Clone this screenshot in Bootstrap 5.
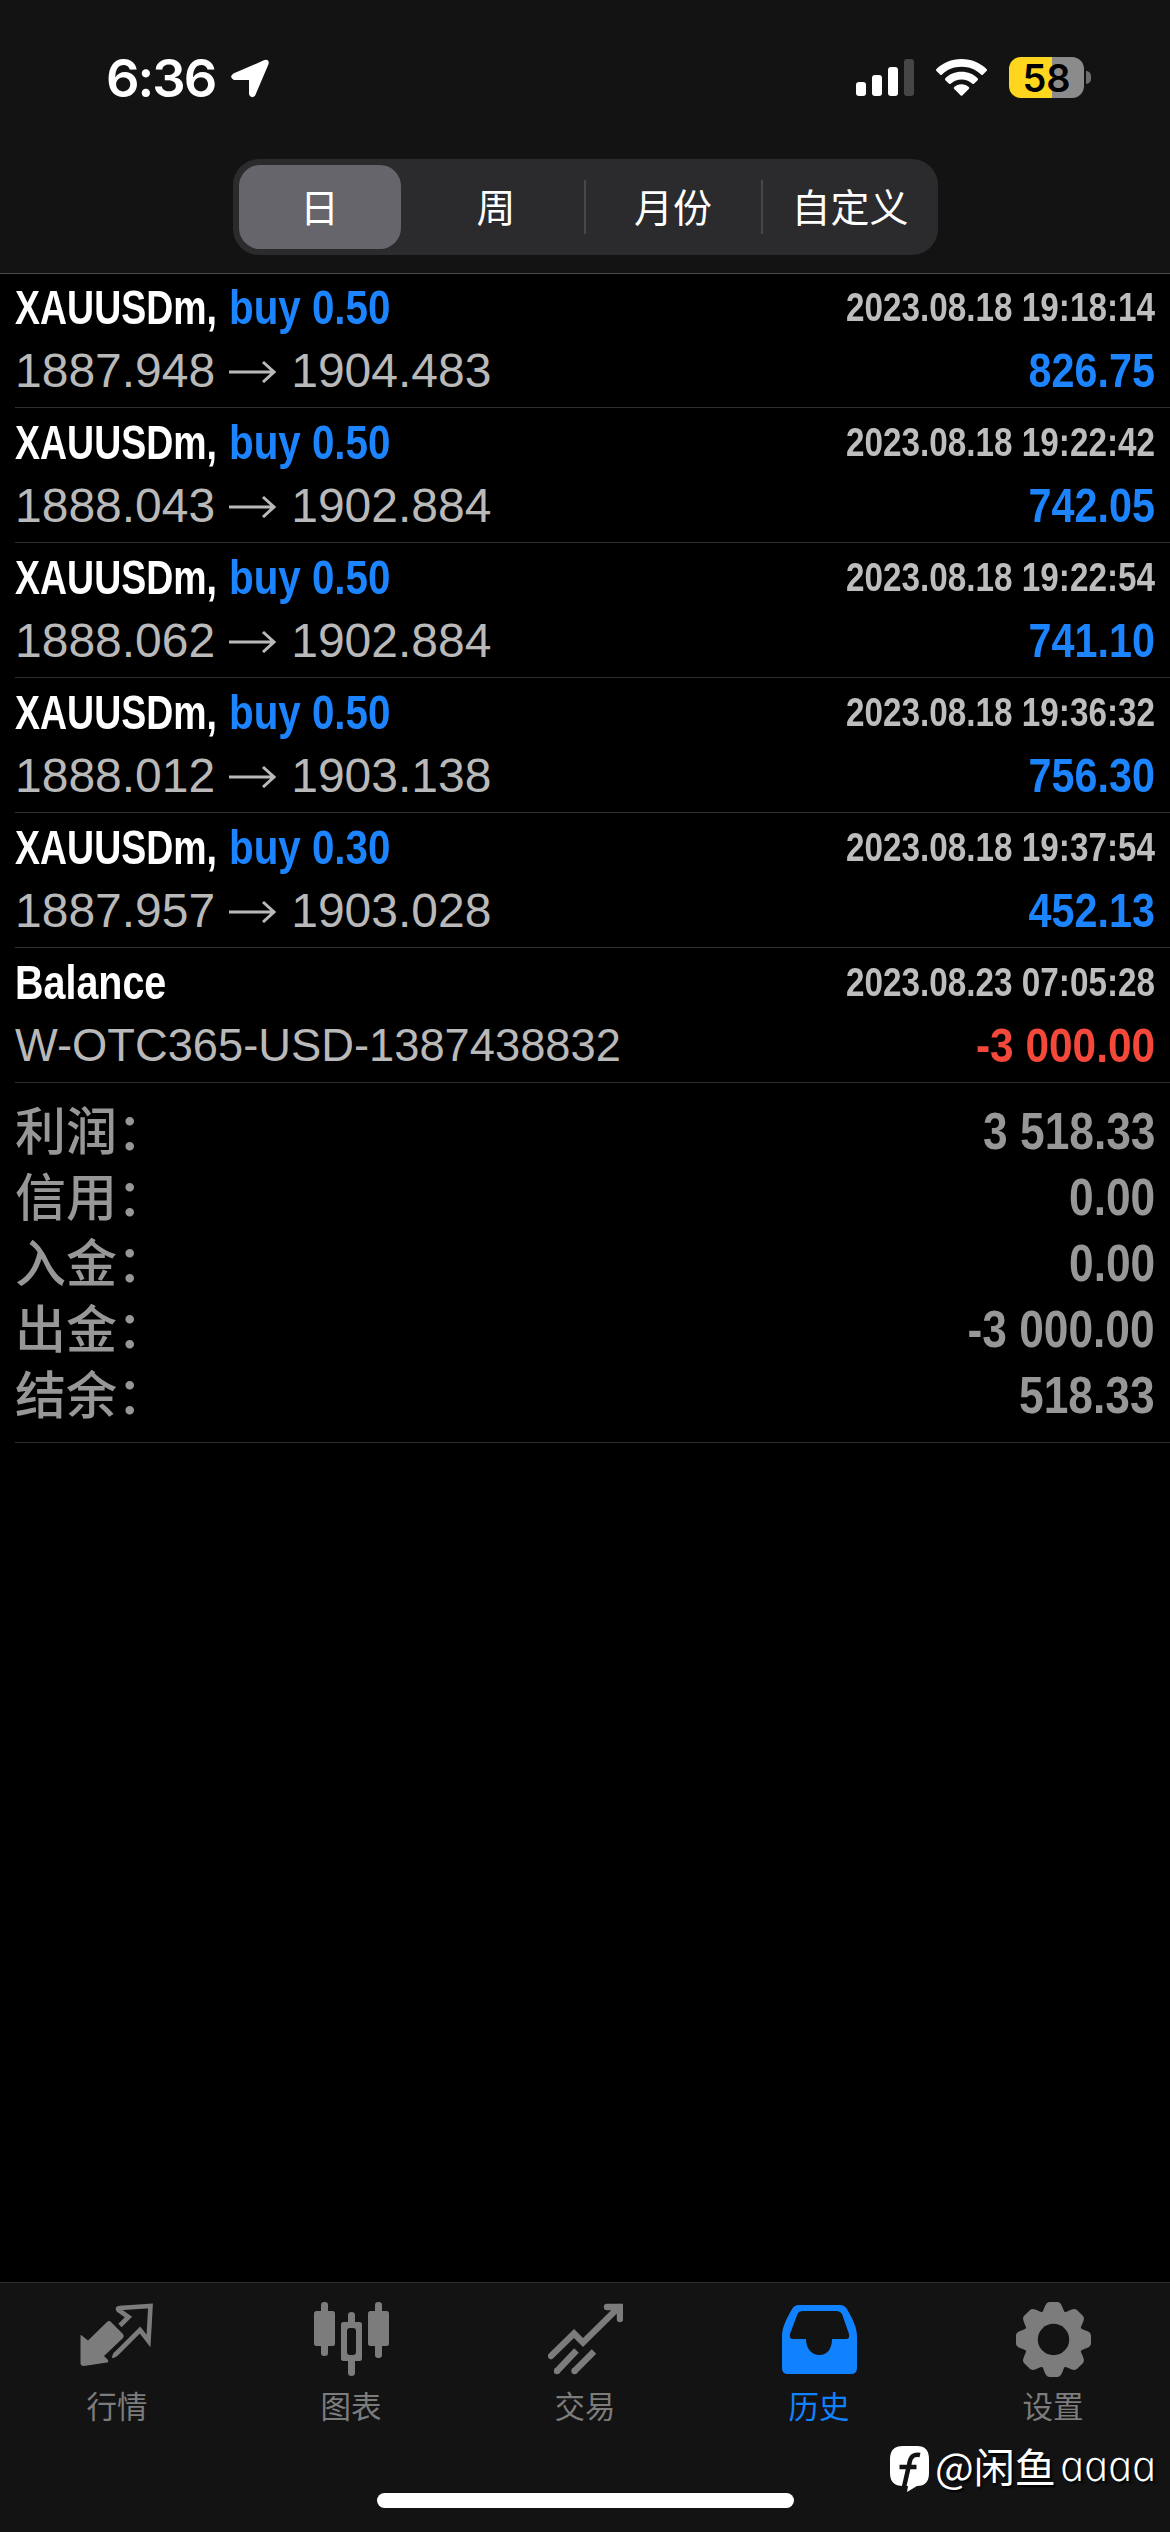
<!DOCTYPE html>
<html lang="zh-CN">
<head>
<meta charset="utf-8">
<meta name="viewport" content="width=device-width, initial-scale=1">
<title>历史</title>
<link rel="stylesheet" href="https://cdn.jsdelivr.net/npm/bootstrap@5.3.0/dist/css/bootstrap.min.css">
<style>
  body { background:#000; color:#fff; font-family:"Liberation Sans","Noto Sans CJK SC",sans-serif; }
  .screen { height:2532px; overflow:hidden; }
  .bar-bg { background:#131313; }
  .top-area { height:274px; border-bottom:1px solid #4b4b4b; }
  .status { height:159px; padding:57px 79px 0 106px; }
  .clock { font:600 52.5px/43px "Inter",sans-serif; width:125px; letter-spacing:-2px; }
  .status svg { display:block; flex:none; }
  .wifi { margin:0 22px; }
  .power { width:75px; height:41px; border-radius:12px; background:linear-gradient(90deg,#ffd61e 43px,#8b8b8b 43px); color:#000; font:600 38px/42px "Inter",sans-serif; }
  .power-tip { width:5px; height:13px; margin:14px 0 0 2px; border-radius:0 5px 5px 0; background:#6d6d6d; }
  .seg { width:705px; height:96px; padding:6px 0 6px 6px; border-radius:26px; background:#2b2b2d; font:400 39px/81px "Noto Sans CJK SC",sans-serif; }
  .seg .nav-link { color:#fff; height:84px; padding:0; flex:1 1 0; border-radius:0; text-align:center; }
  .seg .nav-link.active { flex:0 0 162px; margin-right:8px; border-radius:21px; background:#66656b; }
  .seg-line { width:2px; height:54px; background:#47474a; }
  .ledger { margin-top:-1px; }
  .deal { height:135px; margin-left:15px; padding:3px 15px 0 0; border-bottom:1px solid #2f2f2f; }
  .deal > div { height:63px; line-height:63px; white-space:nowrap; }
  .sym,.side,.when,.gain,.sum { font-weight:700; flex:none; white-space:nowrap; }
  .sym,.side { font-size:49px; transform-origin:0 50%; }
  .sym { width:214px; transform:scaleX(.765); }
  .sym-wide { transform:scaleX(.805); }
  .side { transform:scaleX(.823); color:#1c84ff; }
  .when { font-size:40.5px; line-height:62px; color:#bdbdbd; transform:scaleX(.822); transform-origin:100% 50%; }
  .gain { font-size:49px; color:#1c84ff; transform:scaleX(.843); transform-origin:100% 50%; }
  .gain.loss { color:#f4483a; transform:scaleX(.865); }
  .price { font-size:48px; color:#b9b9b9; }
  .price svg { margin:0 15px 0 13px; display:block; }
  .memo { font-size:45.3px; color:#b9b9b9; }
  .totals { height:360px; margin-left:15px; padding:15px 15px 0 0; border-bottom:1px solid #2f2f2f; color:#979797; }
  .totals > div { height:66px; line-height:66px; }
  .lbl { font:500 51px/60px "Noto Sans CJK SC",sans-serif; }
  .sum { font-size:51.5px; transform:scaleX(.86); transform-origin:100% 50%; }
  .tabs { height:250px; border-top:1px solid #303030; }
  .tabs .nav-link { width:234px; padding:19px 0 0; color:#7c7c7c; font:400 30.5px/44px "Noto Sans CJK SC",sans-serif; }
  .tabs .nav-link.active { color:#1182ff; }
  .tabs svg { display:block; margin-bottom:6px; }
  .home { width:417px; height:15px; border-radius:8px; left:377px; bottom:24px; background:#fff; }
  .stamp { left:889px; bottom:38px; height:50px; font:400 41px/42px "Noto Sans CJK SC",sans-serif; text-shadow:2px 2px 2px #000; white-space:nowrap; }
  .stamp span { margin-top:-8px; }
  .stamp i { display:inline-block; margin:-8px 0 0 3px; font:italic 300 43px/42px "Noto Sans","Open Sans",sans-serif; transform:skewX(12deg); }
</style>
<script src="https://cdn.jsdelivr.net/npm/bootstrap@5.3.0/dist/js/bootstrap.bundle.min.js"></script>
</head>
<body>
<div class="screen d-flex flex-column position-relative">
  <header class="top-area bar-bg flex-shrink-0">
    <div class="status d-flex">
      <div class="clock">6:36</div>
      <svg width="40" height="43" viewBox="0 0 40 43"><path d="M3 18 34 4.500Q37 3.500 36 7L23 37.500Q21 40 19.500 37V21.500H3.500Q0 20 3 18Z" fill="#fff" stroke="#fff" stroke-width="3" stroke-linejoin="round"/></svg>
      <svg class="ms-auto" width="58" height="41" viewBox="0 0 58 41"><g fill="#fff"><rect y="25" width="10" height="14" rx="3"/><rect x="16" y="18" width="10" height="21" rx="3"/><rect x="32" y="10" width="10" height="29" rx="3"/><rect x="48" y="2" width="10" height="37" rx="3" fill="#464646"/></g></svg>
      <svg class="wifi" width="51" height="41" viewBox="0 0 51 41"><g fill="#fff"><path d="M25.500 2C35.500 2 44.500 6 50.500 12Q51.500 13 50.500 14L47 17.500Q46 18.500 45 17.500C40 12.500 33 9.800 25.500 9.800S11 12.500 6 17.500Q5 18.500 4 17.500L.5 14Q-.5 13 .5 12C6.500 6 15.500 2 25.500 2Z"/><path d="M25.500 14.800C32 14.800 37.500 17.200 41.600 21.200Q42.600 22.200 41.600 23.200L38 26.700Q37 27.500 36 26.600C33 24 29.500 22.500 25.500 22.500S18 24 15 26.600Q14 27.500 13 26.700L9.400 23.200Q8.400 22.200 9.400 21.200C13.500 17.200 19 14.800 25.500 14.800Z"/><path d="M25.500 27.200C28.500 27.200 31 28.300 32.800 30Q33.800 31 32.800 32L26.500 38.200Q25.500 39.200 24.500 38.200L18.200 32Q17.200 31 18.200 30C20 28.300 22.500 27.200 25.500 27.200Z"/></g></svg>
      <div class="power text-center">58</div><div class="power-tip"></div>
    </div>
    <nav class="seg nav d-flex flex-nowrap align-items-center mx-auto">
      <a class="nav-link active">日</a><a class="nav-link">周</a><span class="seg-line"></span><a class="nav-link">月份</a><span class="seg-line"></span><a class="nav-link">自定义</a>
    </nav>
  </header>

  <main class="ledger flex-grow-1">
    <div class="deal">
      <div class="d-flex"><span class="sym">XAUUSDm,</span><span class="side">buy 0.50</span><span class="when ms-auto">2023.08.18 19:18:14</span></div>
      <div class="d-flex"><span class="price d-flex align-items-center">1887.948<svg width="48" height="24" viewBox="0 0 48 24"><path d="M1 13H46M35 3 46 13 35 23" fill="none" stroke="#b9b9b9" stroke-width="3"/></svg>1904.483</span><span class="gain ms-auto">826.75</span></div>
    </div>
    <div class="deal">
      <div class="d-flex"><span class="sym">XAUUSDm,</span><span class="side">buy 0.50</span><span class="when ms-auto">2023.08.18 19:22:42</span></div>
      <div class="d-flex"><span class="price d-flex align-items-center">1888.043<svg width="48" height="24" viewBox="0 0 48 24"><path d="M1 13H46M35 3 46 13 35 23" fill="none" stroke="#b9b9b9" stroke-width="3"/></svg>1902.884</span><span class="gain ms-auto">742.05</span></div>
    </div>
    <div class="deal">
      <div class="d-flex"><span class="sym">XAUUSDm,</span><span class="side">buy 0.50</span><span class="when ms-auto">2023.08.18 19:22:54</span></div>
      <div class="d-flex"><span class="price d-flex align-items-center">1888.062<svg width="48" height="24" viewBox="0 0 48 24"><path d="M1 13H46M35 3 46 13 35 23" fill="none" stroke="#b9b9b9" stroke-width="3"/></svg>1902.884</span><span class="gain ms-auto">741.10</span></div>
    </div>
    <div class="deal">
      <div class="d-flex"><span class="sym">XAUUSDm,</span><span class="side">buy 0.50</span><span class="when ms-auto">2023.08.18 19:36:32</span></div>
      <div class="d-flex"><span class="price d-flex align-items-center">1888.012<svg width="48" height="24" viewBox="0 0 48 24"><path d="M1 13H46M35 3 46 13 35 23" fill="none" stroke="#b9b9b9" stroke-width="3"/></svg>1903.138</span><span class="gain ms-auto">756.30</span></div>
    </div>
    <div class="deal">
      <div class="d-flex"><span class="sym">XAUUSDm,</span><span class="side">buy 0.30</span><span class="when ms-auto">2023.08.18 19:37:54</span></div>
      <div class="d-flex"><span class="price d-flex align-items-center">1887.957<svg width="48" height="24" viewBox="0 0 48 24"><path d="M1 13H46M35 3 46 13 35 23" fill="none" stroke="#b9b9b9" stroke-width="3"/></svg>1903.028</span><span class="gain ms-auto">452.13</span></div>
    </div>
    <div class="deal">
      <div class="d-flex"><span class="sym sym-wide">Balance</span><span class="when ms-auto">2023.08.23 07:05:28</span></div>
      <div class="d-flex"><span class="memo">W-OTC365-USD-1387438832</span><span class="gain loss ms-auto">-3 000.00</span></div>
    </div>
    <div class="totals">
      <div class="d-flex justify-content-between"><span class="lbl">利润：</span><span class="sum">3 518.33</span></div>
      <div class="d-flex justify-content-between"><span class="lbl">信用：</span><span class="sum">0.00</span></div>
      <div class="d-flex justify-content-between"><span class="lbl">入金：</span><span class="sum">0.00</span></div>
      <div class="d-flex justify-content-between"><span class="lbl">出金：</span><span class="sum">-3 000.00</span></div>
      <div class="d-flex justify-content-between"><span class="lbl">结余：</span><span class="sum">518.33</span></div>
    </div>
  </main>

  <footer class="tabs bar-bg flex-shrink-0 nav flex-nowrap align-items-start">
    <a class="nav-link d-flex flex-column align-items-center">
      <svg width="75" height="75" viewBox="1 0 75 75"><path d="M1.500 33Q3 33 4 34.500L9 38.500 28 20Q30 18 32 20L44 32Q45.500 34 44 36L25 54 29 58Q30 60 28 60.500L5 64Q1.500 64 1.500 61Z" fill="currentColor"/><path d="M41 23.500 49.500 15 39.500 8Q38 6 40.500 6L71.500 4 69.500 39 61 28 37.500 51.500Q35 54 33.500 53.500" fill="none" stroke="currentColor" stroke-width="4.600"/></svg>行情</a>
    <a class="nav-link d-flex flex-column align-items-center">
      <svg width="75" height="75" viewBox="0 0 75 75"><g fill="currentColor"><rect y="9" width="21" height="35" rx="2.500"/><rect x="7" width="7" height="54" rx="3"/><rect x="54" y="9" width="21" height="35" rx="2.500"/><rect x="61" width="7" height="56" rx="3"/><path fill-rule="evenodd" d="M29.500 20H34V13Q34 10 37.500 10T41 13V20H45.500Q48 20 48 22.500V56.500Q48 59 45.500 59H41V71Q41 74 37.500 74T34 71V59H29.500Q27 59 27 56.500V22.500Q27 20 29.500 20ZM36 26Q33 26 33 29V50Q33 53 36 53H39Q42 53 42 50V29Q42 26 39 26Z"/></g></svg>图表</a>
    <a class="nav-link d-flex flex-column align-items-center">
      <svg width="75" height="75" viewBox="0 0 75 75"><g fill="none" stroke="currentColor" stroke-width="6.400"><path d="M3 54 26 31.500 35 40.500 71 5M59 5H72V17" stroke-linecap="round"/><path d="M9 69 28.500 48.500M26.500 69 46 49.500"/></g><g fill="currentColor"><circle cx="9" cy="69" r="3.200"/><circle cx="26.500" cy="69" r="3.200"/><path d="M66 2H75V11Z"/></g></svg>交易</a>
    <a class="nav-link active d-flex flex-column align-items-center">
      <svg width="75" height="75" viewBox="0 0 75 75"><path fill="currentColor" fill-rule="evenodd" d="M17 3H58Q63 3 65.500 8C70 16 75 25 75 34V66Q75 72 69 72H6Q0 72 0 66V34C0 25 5 16 9.500 8Q12 3 17 3ZM21 9Q17 9 15.500 12L8 32Q7 37 11 37H24C24 46 29 53 37.500 53S50 46 50 37H64Q68 37 67 32L60 12Q58 9 54 9Z"/></svg>历史</a>
    <a class="nav-link d-flex flex-column align-items-center">
      <svg width="75" height="75" viewBox="-37.500 -37.500 75 75"><defs><path id="tooth" d="M-13-26C-9-27-9.500-37.500-4-37.500H4C9.500-37.500 9-27 13-26V0H-13Z"/><mask id="bore"><rect x="-38" y="-38" width="76" height="76" fill="#fff"/><circle r="15.700" fill="#000"/></mask></defs><g fill="currentColor" mask="url(#bore)"><circle r="28"/><use href="#tooth"/><use href="#tooth" transform="rotate(45)"/><use href="#tooth" transform="rotate(90)"/><use href="#tooth" transform="rotate(135)"/><use href="#tooth" transform="rotate(180)"/><use href="#tooth" transform="rotate(225)"/><use href="#tooth" transform="rotate(270)"/><use href="#tooth" transform="rotate(315)"/></g></svg>设置</a>
  </footer>
  <div class="home position-absolute"></div>
  <div class="stamp position-absolute d-flex align-items-center">
    <svg class="me-1" width="42" height="48" viewBox="0 0 42 48"><path d="M14 1H28Q40 1 40 14V28Q40 41 28 41L18 47 19 41H14Q1 41 1 28V14Q1 1 14 1Z" fill="#fff"/><path d="M31 10Q22 8 20.500 18L15 42M10.500 22H27.500" fill="none" stroke="#131313" stroke-width="4.500"/></svg><span>@闲鱼</span><i>aaaa</i>
  </div>
</div>
</body>
</html>
